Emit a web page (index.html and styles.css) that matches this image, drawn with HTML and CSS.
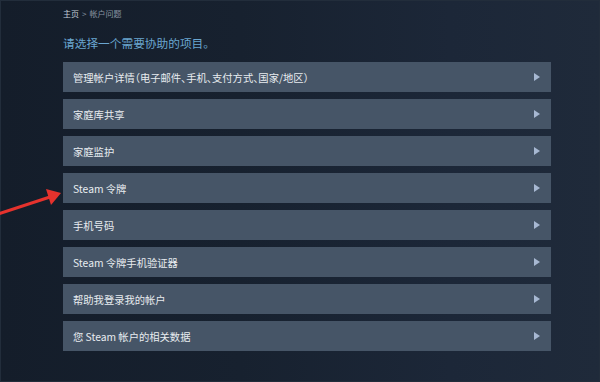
FILE: index.html
```html
<!DOCTYPE html>
<html lang="zh-CN">
<head>
<meta charset="utf-8">
<link rel="stylesheet" href="styles.css">
</head>
<body>
<div class="page">
  <div class="crumbs"><span class="home">主页</span><span class="sep">&gt;</span><span class="cur">帐户问题</span></div>
  <h1 class="title">请选择一个需要协助的项目。</h1>
  <ul class="options">
    <li class="opt"><span>管理帐户详情（电子邮件、手机、支付方式、国家/地区）</span><i class="tri"></i></li>
    <li class="opt"><span>家庭库共享</span><i class="tri"></i></li>
    <li class="opt"><span>家庭监护</span><i class="tri"></i></li>
    <li class="opt"><span>Steam 令牌</span><i class="tri"></i></li>
    <li class="opt"><span>手机号码</span><i class="tri"></i></li>
    <li class="opt"><span>Steam 令牌手机验证器</span><i class="tri"></i></li>
    <li class="opt"><span>帮助我登录我的帐户</span><i class="tri"></i></li>
    <li class="opt"><span>您 Steam 帐户的相关数据</span><i class="tri"></i></li>
  </ul>
  <svg class="pointer" width="70" height="40" viewBox="0 0 70 40">
    <line x1="-2" y1="33" x2="50" y2="16" stroke="#e5322d" stroke-width="3" />
    <polygon points="61,12 46,8 51,24" fill="#e5322d" />
  </svg>
</div>
</body>
</html>
```
FILE: styles.css
```css
html, body {
  margin: 0;
  padding: 0;
}
body {
  width: 600px;
  height: 382px;
  overflow: hidden;
  font-family: "Noto Sans CJK SC", "Noto Sans", sans-serif;
  background: linear-gradient(to right, #141d2a 0%, #17212f 40%, #1c2738 75%, #1f2a3a 100%);
}
.page {
  position: relative;
  box-sizing: border-box;
  height: 382px;
  padding: 8px 0 0 62px;
  border: 1px solid #222d3b;
}
.crumbs {
  font-size: 8px;
  line-height: 10px;
  color: #8a96a3;
  display: flex;
  gap: 3px;
}
.crumbs .home {
  color: #c2ccd6;
}
.title {
  margin: 16px 0 0;
  font-size: 11.7px;
  line-height: 16px;
  font-weight: normal;
  color: #6aa6d0;
}
.options {
  list-style: none;
  margin: 11px 0 0;
  padding: 0;
  width: 488px;
  display: flex;
  flex-direction: column;
  gap: 7px;
}
.opt {
  height: 30px;
  background: #465567;
  display: flex;
  align-items: center;
  justify-content: space-between;
  padding: 0 11px 0 10px;
  color: #e8ecf0;
  font-size: 10.3px;
  font-feature-settings: "halt";
}
.tri {
  width: 0;
  height: 0;
  border-top: 4.5px solid transparent;
  border-bottom: 4.5px solid transparent;
  border-left: 6px solid #a7b8d2;
}
.pointer {
  position: absolute;
  left: -1px;
  top: 180px;
}
```
